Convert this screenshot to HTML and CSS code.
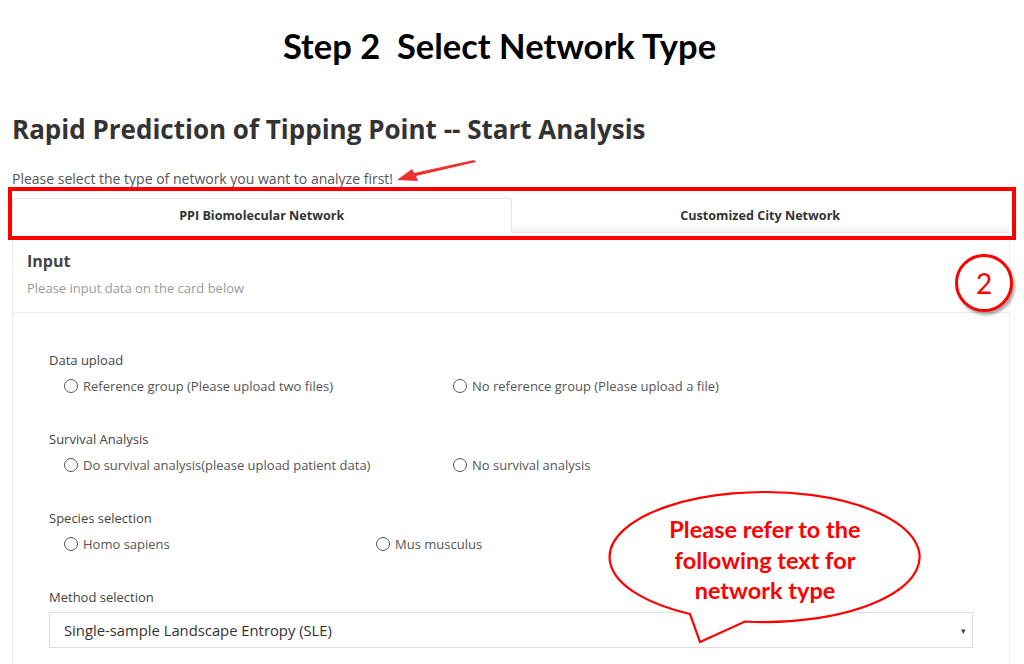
FILE: index.html
```html
<!DOCTYPE html>
<html lang="en">
<head>
    <meta charset="UTF-8">
    <title>Step 2 Select Network Type</title>
    <link rel="stylesheet" href="styles.css">
</head>
<body>
    <h1 class="slide-title">Step 2&nbsp; Select Network Type</h1>

    <div class="page">
        <h2 class="page-title">Rapid Prediction of Tipping Point -- Start Analysis</h2>
        <p class="hint">Please select the type of network you want to analyze first!</p>

        <div class="tabs">
            <div class="tab active">PPI Biomolecular Network</div>
            <div class="tab">Customized City Network</div>
        </div>

        <div class="card">
            <div class="card-head">
                <div class="card-title">Input</div>
                <div class="card-sub">Please input data on the card below</div>
            </div>
            <div class="card-body">
                <div class="field">
                    <div class="label">Data upload</div>
                    <div class="options two">
                        <label class="radio"><span class="dot"></span>Reference group (Please upload two files)</label>
                        <label class="radio"><span class="dot"></span>No reference group (Please upload a file)</label>
                    </div>
                </div>
                <div class="field">
                    <div class="label">Survival Analysis</div>
                    <div class="options two">
                        <label class="radio"><span class="dot"></span>Do survival analysis(please upload patient data)</label>
                        <label class="radio"><span class="dot"></span>No survival analysis</label>
                    </div>
                </div>
                <div class="field">
                    <div class="label">Species selection</div>
                    <div class="options three">
                        <label class="radio"><span class="dot"></span>Homo sapiens</label>
                        <label class="radio"><span class="dot"></span>Mus musculus</label>
                    </div>
                </div>
                <div class="field">
                    <div class="label">Method selection</div>
                    <div class="select">
                        <span>Single-sample Landscape Entropy (SLE)</span>
                        <span class="caret">&#9662;</span>
                    </div>
                </div>
            </div>
        </div>
    </div>

    <!-- annotations drawn over the screenshot -->
    <div class="mark-box"></div>
    <svg class="mark-arrow" width="90" height="30" viewBox="0 0 90 30">
        <polygon points="80,0 82,2 22,16 24,21 3,20 18,9 20,13" fill="#f03030"/>
    </svg>
    <div class="step-badge">2</div>
    <div class="bubble">
        <svg width="320" height="160" viewBox="0 0 320 160">
            <path d="M139 133.5 A155 65 0 1 0 84 126 L94 154 Z" fill="#fff" stroke="#f00" stroke-width="2.2" stroke-linejoin="miter"/>
        </svg>
        <div class="bubble-text">Please refer to the<br>following text for<br>network type</div>
    </div>
</body>
</html>
```

FILE: styles.css
```css
/* Page */
body {
    margin: 0;
    background: #fff;
    font-family: 'Open Sans', sans-serif;
    color: #333;
    position: relative;
    height: 664px;
    overflow: hidden;
}

.slide-title {
    margin: 0;
    padding: 26px 25px 0 0;
    height: 70px;
    box-sizing: border-box;
    font-family: 'Lato', sans-serif;
    font-weight: bold;
    font-size: 34.5px;
    line-height: 40px;
    color: #000;
    text-align: center;
}

.page {
    padding: 0 14px 0 12px;
}

.page-title {
    margin: 41px 0 0;
    font-size: 26px;
    font-weight: bold;
    line-height: 36px;
    color: #333;
}

.hint {
    margin: 23px 0 0;
    font-size: 14px;
    line-height: 18px;
    color: #555;
}

/* Tabs */
.tabs {
    display: flex;
    margin-top: 10px;
    height: 35px;
}

.tab {
    flex: 1;
    display: flex;
    align-items: center;
    justify-content: center;
    font-size: 12.6px;
    font-weight: bold;
    color: #333;
    border: 1px solid #e3e3e3;
    border-radius: 4px 4px 0 0;
    background: linear-gradient(#fff, #f4f4f4);
}

.tab.active {
    background: #fff;
    border-bottom-color: #fff;
}

.tab + .tab {
    border-left: none;
    border-top-color: #fff;
    border-right-color: #fff;
    background: linear-gradient(#fff 70%, #f1f1f3);
}

/* Card */
.card {
    border: 1px solid #ececec;
    border-top: none;
    margin-top: 6px;
    height: 440px;
}

.card-head {
    padding: 11px 14px 14px;
    border-bottom: 1px solid #eee;
}

.card-title {
    font-size: 16px;
    font-weight: bold;
    color: #444;
    line-height: 22px;
}

.card-sub {
    margin-top: 6px;
    font-size: 13px;
    color: #9a9a9a;
    line-height: 20px;
}

.card-body {
    padding: 38px 36px 0;
}

.field {
    margin-bottom: 35px;
}

.label {
    font-size: 13px;
    color: #444;
    line-height: 18px;
}

.options {
    display: grid;
    padding-left: 15px;
    margin-top: 8px;
}

.options.two {
    grid-template-columns: 389px 1fr;
}

.options.three {
    grid-template-columns: 312px 1fr;
}

.radio {
    display: flex;
    align-items: center;
    font-size: 13px;
    color: #555;
    line-height: 18px;
}

.dot {
    width: 14px;
    height: 14px;
    border: 1px solid #555;
    border-radius: 50%;
    margin-right: 5px;
    box-sizing: border-box;
}

.select {
    margin-top: 6px;
    height: 34px;
    border: 1px solid #ddd;
    display: flex;
    align-items: center;
    justify-content: space-between;
    padding: 0 6px 0 14px;
    font-size: 14.8px;
    color: #333;
}

.caret {
    font-size: 9px;
    color: #444;
}

/* Annotations */
.mark-box {
    position: absolute;
    left: 8px;
    top: 187px;
    width: 1000px;
    height: 45px;
    border: 4px solid #f00;
}

.mark-arrow {
    position: absolute;
    left: 394px;
    top: 160px;
}

.step-badge {
    position: absolute;
    left: 955px;
    top: 254px;
    width: 52px;
    height: 52px;
    border: 3px solid #f00;
    border-radius: 50%;
    background: #fff;
    box-shadow: 2px 3px 3px rgba(0, 0, 0, 0.35);
    color: #f00;
    font-family: 'Lato', sans-serif;
    font-size: 28px;
    display: flex;
    align-items: center;
    justify-content: center;
}

.bubble {
    position: absolute;
    left: 606px;
    top: 488px;
    width: 320px;
    height: 160px;
}

.bubble svg {
    display: block;
}

.bubble-text {
    position: absolute;
    left: 0;
    top: 26px;
    width: 318px;
    text-align: center;
    font-family: 'Lato', sans-serif;
    font-weight: bold;
    font-size: 23.5px;
    line-height: 30.5px;
    color: #f00;
}
```
